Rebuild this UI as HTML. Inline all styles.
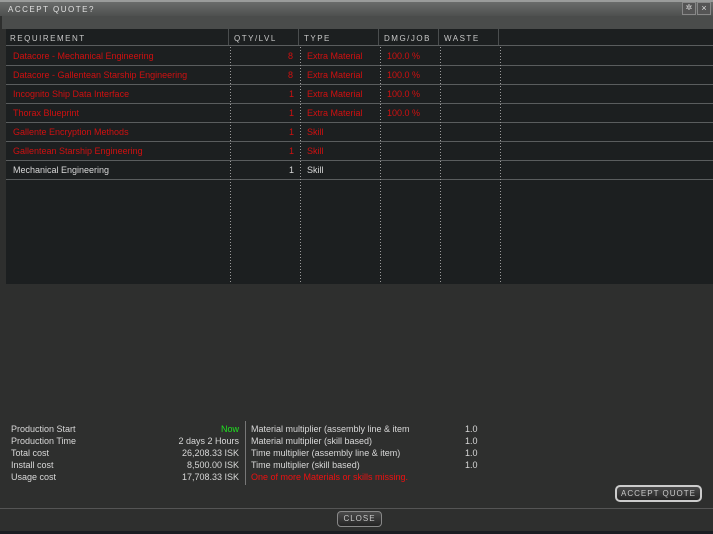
<!DOCTYPE html>
<html><head><style>
*{margin:0;padding:0;box-sizing:border-box}
body{width:713px;height:534px;background:#2e2f2e;font-family:"Liberation Sans",sans-serif;font-size:9px;color:#d8d8d8;position:relative;overflow:hidden}
.a{position:absolute;white-space:nowrap}
.red{color:#d01010}
.dot{position:absolute;width:1px;background:repeating-linear-gradient(#9a9a9a 0 1px,transparent 1px 3px)}
.hl{position:absolute;left:6px;width:707px;height:1px;background:#5a5d5e}
.hd{position:absolute;top:34px;font-size:8px;letter-spacing:1.5px;color:#c8c8c8}
.vs{position:absolute;top:29px;height:16px;width:1px;background:#4a4d4e}
.btn{position:absolute;border:1px solid #888;border-radius:4px;background:linear-gradient(#4a4a4a,#242424);color:#c8c8c8;font-size:8px;letter-spacing:1px;text-align:center}
</style></head><body>
<div class="a" style="left:0;top:0;width:713px;height:16px;background:linear-gradient(#6a6c6b,#4e504f);border-top:2px solid #9a9c9b"></div>
<div class="a" style="left:8px;top:5px;font-size:8px;letter-spacing:1.5px;color:#e0e0e0">ACCEPT QUOTE?</div>
<div class="a" style="left:682px;top:2px;width:14px;height:13px;border:1px solid #888;background:#555;color:#ddd;font-size:8px;text-align:center">✲</div>
<div class="a" style="left:697px;top:2px;width:14px;height:13px;border:1px solid #888;background:#555;color:#ddd;font-size:9px;text-align:center">×</div>
<div class="a" style="left:2px;top:16px;width:711px;height:13px;background:#4a4c4b"></div>
<div class="a" style="left:6px;top:29px;width:707px;height:255px;background:#1c1f20"></div>
<div class="hd" style="left:10px">REQUIREMENT</div>
<div class="hd" style="left:234px">QTY/LVL</div>
<div class="hd" style="left:304px">TYPE</div>
<div class="hd" style="left:384px">DMG/JOB</div>
<div class="hd" style="left:444px">WASTE</div>
<div class="vs" style="left:228px"></div><div class="vs" style="left:298px"></div><div class="vs" style="left:378px"></div><div class="vs" style="left:438px"></div><div class="vs" style="left:498px"></div>
<div class="hl" style="top:45px"></div><div class="hl" style="top:65px"></div><div class="hl" style="top:84px"></div><div class="hl" style="top:103px"></div><div class="hl" style="top:122px"></div><div class="hl" style="top:141px"></div><div class="hl" style="top:160px"></div><div class="hl" style="top:179px"></div>
<div class="dot" style="left:230px;top:47px;height:237px"></div>
<div class="dot" style="left:300px;top:47px;height:237px"></div>
<div class="dot" style="left:380px;top:47px;height:237px"></div>
<div class="dot" style="left:440px;top:47px;height:237px"></div>
<div class="dot" style="left:500px;top:47px;height:237px"></div>
<div class="a red" style="left:13px;top:51px">Datacore - Mechanical Engineering</div>
<div class="a red" style="left:13px;top:70px">Datacore - Gallentean Starship Engineering</div>
<div class="a red" style="left:13px;top:89px">Incognito Ship Data Interface</div>
<div class="a red" style="left:13px;top:108px">Thorax Blueprint</div>
<div class="a red" style="left:13px;top:127px">Gallente Encryption Methods</div>
<div class="a red" style="left:13px;top:146px">Gallentean Starship Engineering</div>
<div class="a" style="left:13px;top:165px">Mechanical Engineering</div>
<div class="a red" style="left:288px;top:51px">8</div><div class="a red" style="left:288px;top:70px">8</div><div class="a red" style="left:289px;top:89px">1</div><div class="a red" style="left:289px;top:108px">1</div><div class="a red" style="left:289px;top:127px">1</div><div class="a red" style="left:289px;top:146px">1</div><div class="a" style="left:289px;top:165px">1</div>
<div class="a red" style="left:307px;top:51px">Extra Material</div><div class="a red" style="left:307px;top:70px">Extra Material</div><div class="a red" style="left:307px;top:89px">Extra Material</div><div class="a red" style="left:307px;top:108px">Extra Material</div><div class="a red" style="left:307px;top:127px">Skill</div><div class="a red" style="left:307px;top:146px">Skill</div><div class="a" style="left:307px;top:165px">Skill</div>
<div class="a red" style="left:387px;top:51px">100.0 %</div><div class="a red" style="left:387px;top:70px">100.0 %</div><div class="a red" style="left:387px;top:89px">100.0 %</div><div class="a red" style="left:387px;top:108px">100.0 %</div>
<div class="a" style="left:11px;top:423px;line-height:12px">Production Start<br>Production Time<br>Total cost<br>Install cost<br>Usage cost</div>
<div class="a" style="left:120px;width:119px;top:423px;line-height:12px;text-align:right"><span style="color:#20e020">Now</span><br>2 days 2 Hours<br>26,208.33 ISK<br>8,500.00 ISK<br>17,708.33 ISK</div>
<div class="a" style="left:245px;top:421px;width:1px;height:64px;background:#777"></div>
<div class="a" style="left:251px;top:423px;line-height:12px">Material multiplier (assembly line &amp; item<br>Material multiplier (skill based)<br>Time multiplier (assembly line &amp; item)<br>Time multiplier (skill based)<br><span style="color:#ee1010">One of more Materials or skills missing.</span></div>
<div class="a" style="left:465px;top:423px;line-height:12px">1.0<br>1.0<br>1.0<br>1.0</div>
<div class="btn" style="left:615px;top:485px;width:87px;height:17px;line-height:14px;border:2px solid #ccc;border-radius:5px">ACCEPT QUOTE</div>
<div class="a" style="left:0;top:508px;width:713px;height:1px;background:#555"></div>
<div class="btn" style="left:337px;top:511px;width:45px;height:16px;line-height:14px">CLOSE</div>
<div class="a" style="left:0;top:531px;width:713px;height:3px;background:#1a1c22"></div>
</body></html>
